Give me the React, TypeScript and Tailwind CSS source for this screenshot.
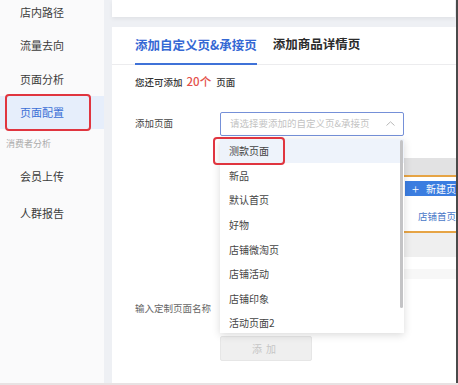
const font = { fontFamily: '"Noto Sans CJK SC", "Noto Sans", sans-serif' };

const navTop = ['店内路径', '流量去向', '页面分析'];
const options = ['测款页面', '新品', '默认首页', '好物', '店铺微淘页', '店铺活动', '店铺印象', '活动页面2'];

function Sidebar() {
  return (
    <aside className="relative w-[104px] shrink-0 bg-[#fafafb]">
      <div className="-mt-[5px]">
        {navTop.map((item) => (
          <div key={item} className="h-[33.5px] flex items-center pl-[20px] text-[11px] text-[#3a3a3a]">
            {item}
          </div>
        ))}
        <div className="relative h-[33.5px] flex items-center pl-[20px] text-[11px] text-[#3b6fd6] bg-[#e6eefb]">
          页面配置
          <div className="absolute left-[5px] top-[-2px] w-[86px] h-[37px] border-2 border-[#e0353f] rounded-[4px]" />
        </div>
        <div className="h-[30px] flex items-center pl-[6px] text-[9px] text-[#ababab]">消费者分析</div>
        <div className="h-[34px] flex items-center pl-[20px] text-[11px] text-[#3a3a3a]">会员上传</div>
        <div className="mt-[3px] h-[34px] flex items-center pl-[20px] text-[11px] text-[#3a3a3a]">人群报告</div>
      </div>
    </aside>
  );
}

function BackgroundPanel() {
  return (
    <div className="h-[160px] w-[236px] overflow-hidden flex flex-col">
      <div className="h-[22px]" />
      <div className="h-[17px] bg-[#e2e2e3]" />
      <div className="h-[2px] bg-[#e6a445]" />
      <div className="h-[54px] flex">
        <div className="w-[185px] shrink-0" />
        <div className="flex-1 flex flex-col min-w-0">
          <div className="mt-[4px] h-[15px] bg-[#3b7de0] text-white text-[10px] flex items-center pl-[7px] gap-[7px] whitespace-nowrap overflow-hidden">
            <span className="text-[13px] leading-none font-light">+</span>
            <span>新建页</span>
          </div>
          <div className="mt-[13px] pl-[13px] text-[9.5px] text-[#4a78c8] whitespace-nowrap">店铺首页</div>
        </div>
      </div>
      <div className="h-[2px] bg-[#e6a445]" />
      <div className="h-[24px] bg-[#efefef]" />
      <div className="mt-[12px] h-[10px] bg-[#f7f7f7]" />
    </div>
  );
}

function PageSelect() {
  return (
    <div className="relative w-[184px] h-[24px] border border-[#7590d8] rounded-[2px] flex items-center pl-[9px] pr-[8px] bg-white">
      <span className="flex-1 text-[9.5px] text-[#c3c3c3] whitespace-nowrap">请选择要添加的自定义页&amp;承接页</span>
      <svg width="9" height="5" viewBox="0 0 9 5" className="shrink-0">
        <path d="M0.5 4.5 L4.5 0.8 L8.5 4.5" fill="none" stroke="#b8b8b8" strokeWidth="1" />
      </svg>
      <div className="absolute left-[-1px] top-[26px] w-[184px] h-[194px] bg-white shadow-[0_2px_8px_rgba(0,0,0,0.15)] overflow-hidden z-10">
        {options.map((o, i) => (
          <div
            key={o}
            className={`h-[24.6px] flex items-center pl-[9px] text-[10px] text-[#444] ${i === 0 ? 'bg-[#eef3fb]' : ''}`}
          >
            {o}
          </div>
        ))}
        <div className="absolute right-[1px] top-[1px] w-[3px] h-[168px] bg-[#c4c4c6] rounded-full" />
      </div>
      <div className="absolute left-[-8px] top-[24px] w-[72px] h-[28px] border-2 border-[#e0353f] rounded-[4px] z-20" />
    </div>
  );
}

function ConfigCard() {
  return (
    <div className="flex-1 bg-white overflow-hidden min-w-0">
      <div className="h-[37.5px] flex items-end pl-[23px] gap-[16px] border-b border-[#ececee]">
        <div className="h-full flex items-center border-b-2 border-[#3f72d8] text-[12.5px] font-bold text-[#3568d4] -mb-px pt-[1px]">
          添加自定义页&amp;承接页
        </div>
        <div className="h-full flex items-center text-[12.5px] font-bold text-[#2b2b2b] pb-px">添加商品详情页</div>
      </div>
      <div className="pl-[23px] mt-[10px] h-[15px] flex items-center text-[9.5px] font-medium text-[#333]">
        您还可添加
        <span className="ml-[4px] mr-[5px] text-[11.5px] text-[#e4514b]">20个</span>
        页面
      </div>
      <div className="mt-[22px] flex pl-[23px]">
        <div className="w-[85px] shrink-0 h-[24px] flex items-center text-[9.5px] text-[#444]">添加页面</div>
        <div className="flex flex-col">
          <PageSelect />
          <BackgroundPanel />
        </div>
      </div>
      <div className="flex pl-[23px]">
        <div className="w-[85px] shrink-0 h-[26px] flex items-center text-[9.5px] text-[#666] whitespace-nowrap">输入定制页面名称</div>
        <div className="w-[184px] h-[26px] border border-[#e2e2e2] rounded-[2px]" />
      </div>
      <div className="flex pl-[108px] mt-[14px]">
        <div className="w-[92px] h-[25px] bg-[#efefef] border border-[#e6e6e6] rounded-[2px] flex items-center justify-center text-[10px] text-[#c6c6c6] tracking-[4px]">
          添加
        </div>
      </div>
    </div>
  );
}

export default function App() {
  return (
    <div className="w-[458px] h-[385px] overflow-hidden flex bg-[#eef0f4] border-b-2 border-[#e8e2e3]" style={font}>
      <Sidebar />
      <main className="flex-1 flex flex-col pl-[8px] min-w-0">
        <div className="h-[17px] bg-white shadow-[0_2px_4px_rgba(0,0,0,0.06)] mr-[1px]" />
        <div className="mt-[10px] flex-1 flex min-h-0">
          <ConfigCard />
        </div>
      </main>
      <div className="w-[2px] shrink-0 bg-[#4a4a4a]" />
    </div>
  );
}
